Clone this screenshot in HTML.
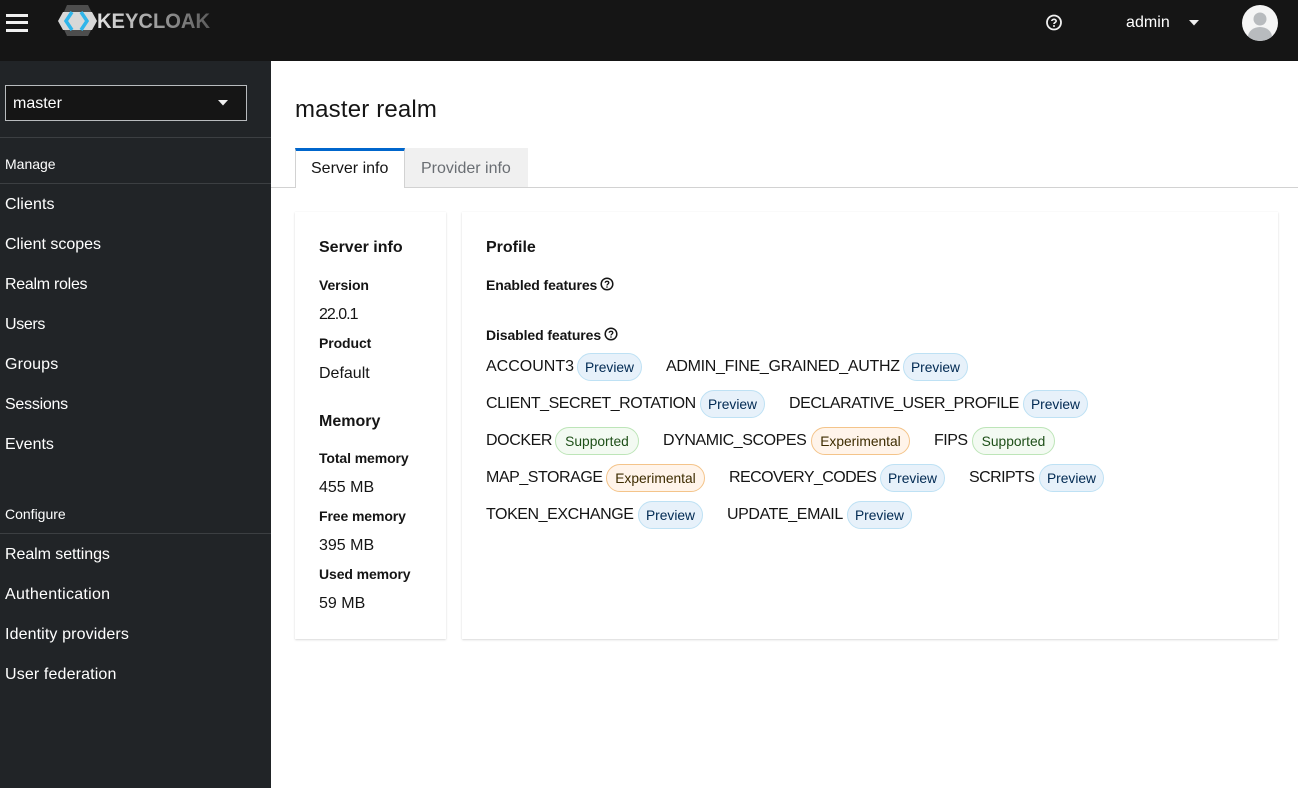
<!DOCTYPE html>
<html><head><meta charset="utf-8"><style>
html,body{margin:0;padding:0;width:1298px;height:788px;overflow:hidden;background:#fff;font-family:"Liberation Sans",sans-serif;color:#151515}
.t{position:absolute;white-space:nowrap;font-size:16px;line-height:20px}
.s{color:#fff}
.b{font-weight:700;font-size:14px;letter-spacing:-.1px}
.h{font-weight:700;font-size:16px}
.l{position:absolute;white-space:nowrap;font-size:16px;line-height:20px}
.p{position:absolute;height:26px;line-height:27px;border-radius:14px;font-size:13.8px;text-align:center;box-sizing:content-box;white-space:nowrap}
.pv{background:#e7f1fa;border:1px solid #bee1f4;color:#002952}
.su{background:#f3faf2;border:1px solid #bde5b8;color:#1e4f18}
.ex{background:#fff4ea;border:1px solid #f4c48a;color:#3d2c00}
.bx{position:absolute;background:#fff;box-shadow:0 1px 2px rgba(3,3,3,.14),0 0 1px rgba(3,3,3,.06)}
.ln{position:absolute;background:#3c3f42;height:1px;left:0;width:271px}
</style></head><body>
<div style="position:absolute;left:0;top:0;width:1298px;height:61px;background:#151515"></div>
<div style="position:absolute;left:0;top:61px;width:271px;height:727px;background:#212427"></div>

<svg style="position:absolute;left:0;top:0" width="240" height="61" viewBox="0 0 240 61">
<defs><linearGradient id="g" x1="96" x2="210" y1="0" y2="0" gradientUnits="userSpaceOnUse"><stop offset="0" stop-color="#e4e4e4"/><stop offset=".45" stop-color="#a8a8a8"/><stop offset="1" stop-color="#5c5c5c"/></linearGradient></defs>
<rect x="6" y="14" width="22" height="3" fill="#f0f0f0"/><rect x="6" y="21" width="22" height="3" fill="#f0f0f0"/><rect x="6" y="29" width="22" height="3" fill="#f0f0f0"/>
<polygon points="60,21 67,5 88,5 96,21 88,36 67,36" fill="#4d4d4d"/>
<polygon points="58,21 63,12 92,12 97,21 92,30 63,30" fill="#d8d8d8"/>
<path d="M72 12 L66 21 L72 30" fill="none" stroke="#2fb5ea" stroke-width="3.500"/>
<path d="M81 12 L87 21 L81 30" fill="none" stroke="#2fb5ea" stroke-width="3.500"/>
<text x="97" y="28" font-family="Liberation Sans" font-weight="700" font-size="21" fill="url(#g)" textLength="113" lengthAdjust="spacingAndGlyphs">KEYCLOAK</text>
</svg>

<svg style="position:absolute;left:1045px;top:14px" width="18" height="18" viewBox="0 0 18 18"><circle cx="9" cy="8.500" r="7" fill="none" stroke="#f0f0f0" stroke-width="1.800"/><path d="M6.800 7 C6.800 4.800 11.200 4.800 11.200 7 C11.200 8.500 9 8.300 9 10" fill="none" stroke="#f0f0f0" stroke-width="1.600"/><circle cx="9" cy="12" r="1" fill="#f0f0f0"/></svg>
<div class="t s" style="left:1126px;top:13px;letter-spacing:.05px">admin</div>
<svg style="position:absolute;left:1189px;top:20px" width="11" height="7"><polygon points="0,0 10,0 5,5.500" fill="#f0f0f0"/></svg>
<svg style="position:absolute;left:1242px;top:5px" width="36" height="36" viewBox="0 0 36 36"><defs><clipPath id="c"><circle cx="18" cy="18" r="18"/></clipPath></defs><circle cx="18" cy="18" r="18" fill="#f5f5f5"/><g clip-path="url(#c)"><circle cx="18" cy="14" r="6.500" fill="#b8bbbe"/><ellipse cx="18" cy="32" rx="12" ry="10" fill="#b8bbbe"/></g></svg>

<div style="position:absolute;left:5px;top:85px;width:240px;height:34px;background:#151515;border:1px solid #b8bbbe"></div>
<div class="t s" style="left:13px;top:94px">master</div>
<svg style="position:absolute;left:218px;top:100px" width="11" height="7"><polygon points="0,0 10,0 5,5.500" fill="#f0f0f0"/></svg>

<div class="ln" style="top:137px"></div>
<div class="t s" style="left:5px;top:154px;font-size:14px">Manage</div>
<div class="ln" style="top:183px"></div>
<div class="t s" style="left:5px;top:195px;letter-spacing:.1px">Clients</div>
<div class="t s" style="left:5px;top:235px">Client scopes</div>
<div class="t s" style="left:5px;top:275px;letter-spacing:-.28px">Realm roles</div>
<div class="t s" style="left:5px;top:315px;letter-spacing:-.35px">Users</div>
<div class="t s" style="left:5px;top:355px;letter-spacing:.15px">Groups</div>
<div class="t s" style="left:5px;top:395px;letter-spacing:-.25px">Sessions</div>
<div class="t s" style="left:5px;top:435px">Events</div>
<div class="t s" style="left:5px;top:504px;font-size:14px">Configure</div>
<div class="ln" style="top:533px"></div>
<div class="t s" style="left:5px;top:545px;letter-spacing:-.07px">Realm settings</div>
<div class="t s" style="left:5px;top:585px;letter-spacing:.28px">Authentication</div>
<div class="t s" style="left:5px;top:625px;letter-spacing:.12px">Identity providers</div>
<div class="t s" style="left:5px;top:665px;letter-spacing:.14px">User federation</div>

<div class="t" style="left:295px;top:95px;font-size:24px;line-height:30px;letter-spacing:.17px">master realm</div>

<div style="position:absolute;left:271px;top:187px;width:1027px;height:1px;background:#d2d2d2"></div>
<div style="position:absolute;left:405px;top:148px;width:123px;height:39px;background:#f0f0f0"></div>
<div style="position:absolute;left:295px;top:148px;width:110px;background:#fff;border-left:1px solid #d2d2d2;border-right:1px solid #d2d2d2;box-sizing:border-box;border-top:3px solid #06c;height:40px"></div>
<div class="t" style="left:311px;top:159px">Server info</div>
<div class="t" style="left:421px;top:159px;color:#6a6e73">Provider info</div>

<div class="bx" style="left:295px;top:212px;width:151px;height:427px"></div>
<div class="bx" style="left:462px;top:212px;width:816px;height:427px"></div>

<div class="t h" style="left:319px;top:238px">Server info</div>
<div class="t b" style="left:319px;top:275px">Version</div>
<div class="t" style="left:319px;top:305px;letter-spacing:-1px">22.0.1</div>
<div class="t b" style="left:319px;top:333px">Product</div>
<div class="t" style="left:319px;top:364px">Default</div>
<div class="t h" style="left:319px;top:412px">Memory</div>
<div class="t b" style="left:319px;top:448px">Total memory</div>
<div class="t" style="left:319px;top:478px">455 MB</div>
<div class="t b" style="left:319px;top:506px">Free memory</div>
<div class="t" style="left:319px;top:536px">395 MB</div>
<div class="t b" style="left:319px;top:564px">Used memory</div>
<div class="t" style="left:319px;top:594px">59 MB</div>

<div class="t h" style="left:486px;top:238px">Profile</div>
<div class="t b" style="left:486px;top:275px">Enabled features</div>
<svg style="position:absolute;left:600px;top:277px" width="15" height="15" viewBox="0 0 15 15"><circle cx="7" cy="7" r="5.800" fill="none" stroke="#151515" stroke-width="1.500"/><path d="M5.200 5.800 C5.200 3.800 8.800 3.800 8.800 5.800 C8.800 7 7 7 7 8.500" fill="none" stroke="#151515" stroke-width="1.300"/><circle cx="7" cy="10" r=".8" fill="#151515"/></svg>
<div class="t b" style="left:486px;top:325px">Disabled features</div>
<svg style="position:absolute;left:604px;top:327px" width="15" height="15" viewBox="0 0 15 15"><circle cx="7" cy="7" r="5.800" fill="none" stroke="#151515" stroke-width="1.500"/><path d="M5.200 5.800 C5.200 3.800 8.800 3.800 8.800 5.800 C8.800 7 7 7 7 8.500" fill="none" stroke="#151515" stroke-width="1.300"/><circle cx="7" cy="10" r=".8" fill="#151515"/></svg>

<div class="l" style="left:486px;top:357px">ACCOUNT3</div><div class="p pv" style="left:577px;top:353px;width:63px">Preview</div>
<div class="l" style="left:666px;top:357px;letter-spacing:-.3px">ADMIN_FINE_GRAINED_AUTHZ</div><div class="p pv" style="left:903px;top:353px;width:63px">Preview</div>
<div class="l" style="left:486px;top:394px;letter-spacing:-.46px">CLIENT_SECRET_ROTATION</div><div class="p pv" style="left:700px;top:390px;width:63px">Preview</div>
<div class="l" style="left:789px;top:394px;letter-spacing:-.45px">DECLARATIVE_USER_PROFILE</div><div class="p pv" style="left:1023px;top:390px;width:63px">Preview</div>
<div class="l" style="left:486px;top:431px;letter-spacing:-.4px">DOCKER</div><div class="p su" style="left:555px;top:427px;width:82px">Supported</div>
<div class="l" style="left:663px;top:431px;letter-spacing:-.43px">DYNAMIC_SCOPES</div><div class="p ex" style="left:811px;top:427px;width:97px">Experimental</div>
<div class="l" style="left:934px;top:431px;letter-spacing:-.5px">FIPS</div><div class="p su" style="left:972px;top:427px;width:81px">Supported</div>
<div class="l" style="left:486px;top:468px;letter-spacing:-.45px">MAP_STORAGE</div><div class="p ex" style="left:606px;top:464px;width:97px">Experimental</div>
<div class="l" style="left:729px;top:468px;letter-spacing:-.57px">RECOVERY_CODES</div><div class="p pv" style="left:880px;top:464px;width:63px">Preview</div>
<div class="l" style="left:969px;top:468px;letter-spacing:-.57px">SCRIPTS</div><div class="p pv" style="left:1039px;top:464px;width:63px">Preview</div>
<div class="l" style="left:486px;top:505px;letter-spacing:-.43px">TOKEN_EXCHANGE</div><div class="p pv" style="left:638px;top:501px;width:63px">Preview</div>
<div class="l" style="left:727px;top:505px;letter-spacing:-.4px">UPDATE_EMAIL</div><div class="p pv" style="left:847px;top:501px;width:63px">Preview</div>
</body></html>
